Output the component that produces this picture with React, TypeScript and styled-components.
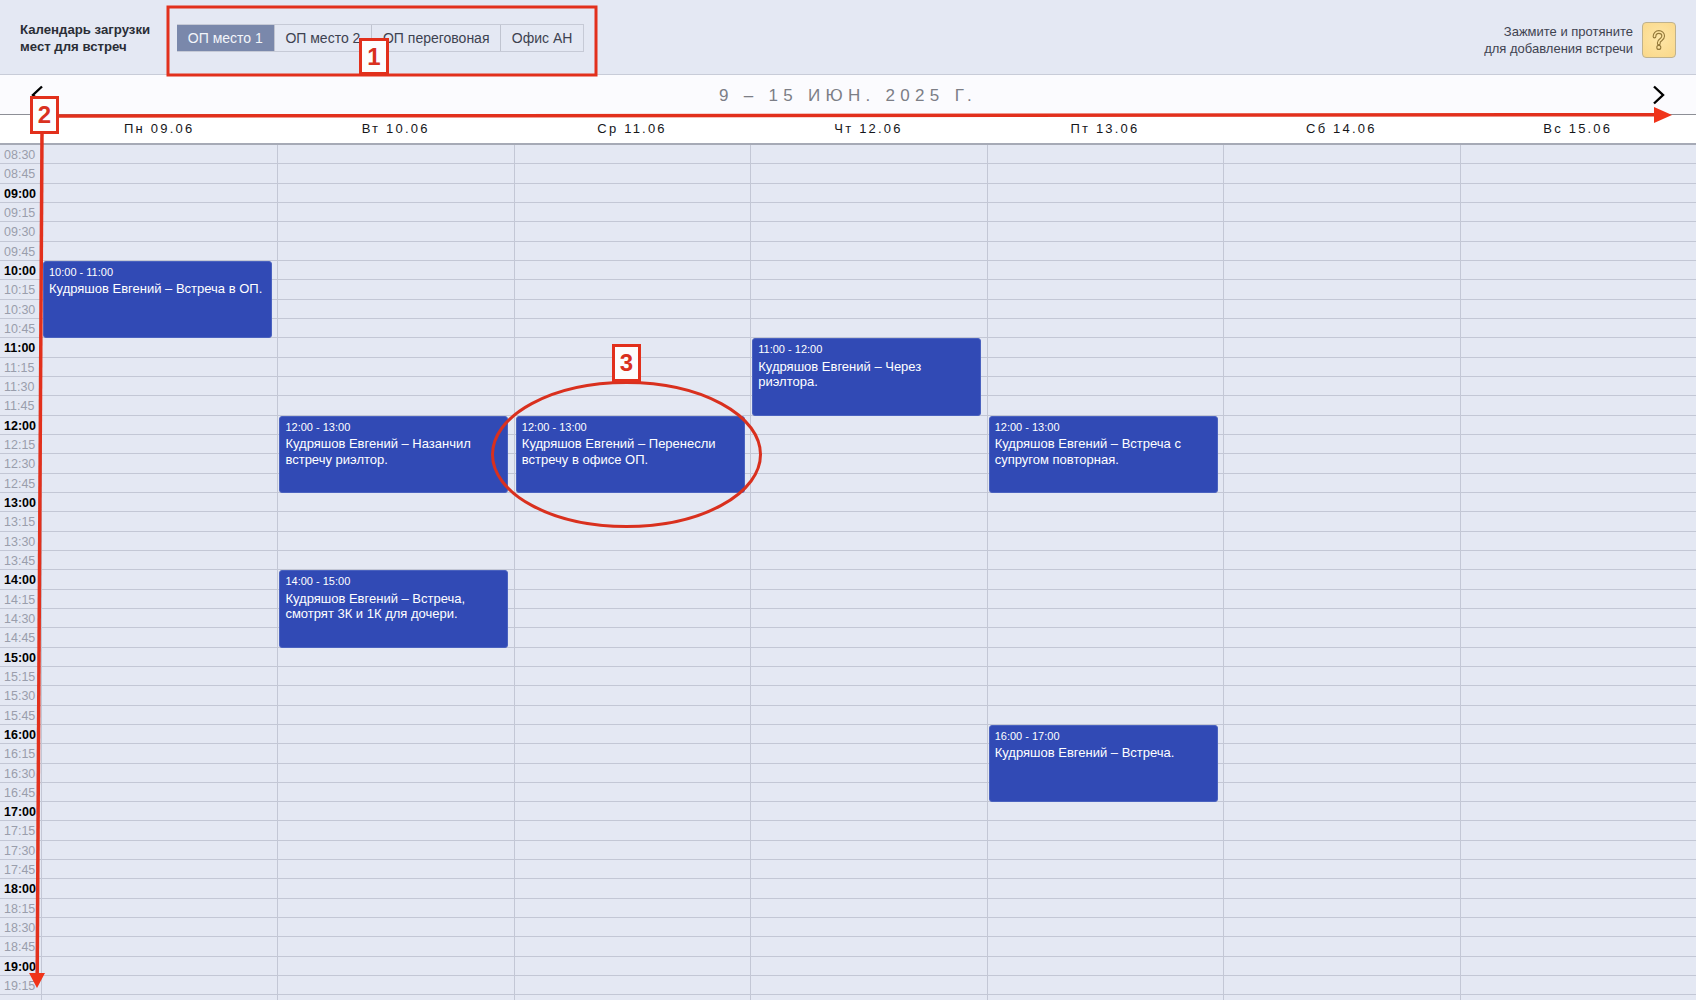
import React from "react";
import styled, { createGlobalStyle } from "styled-components";

const ROW_H = 19.33;
const DAYS = ["Пн 09.06", "Вт 10.06", "Ср 11.06", "Чт 12.06", "Пт 13.06", "Сб 14.06", "Вс 15.06"];
const TABS = ["ОП место 1", "ОП место 2", "ОП переговоная", "Офис АН"];

const slotTimes: string[] = [];
for (let m = 8 * 60 + 30; m <= 19 * 60 + 15; m += 15) {
  slotTimes.push(`${String(Math.floor(m / 60)).padStart(2, "0")}:${String(m % 60).padStart(2, "0")}`);
}
// one empty row cut off by the bottom of the window
slotTimes.push("");

const EVENTS = [
  { day: 0, row: 6, time: "10:00 - 11:00", text: "Кудряшов Евгений – Встреча в ОП." },
  { day: 1, row: 14, time: "12:00 - 13:00", text: "Кудряшов Евгений – Назанчил встречу риэлтор." },
  { day: 1, row: 22, time: "14:00 - 15:00", text: "Кудряшов Евгений – Встреча, смотрят 3К и 1К для дочери." },
  { day: 2, row: 14, time: "12:00 - 13:00", text: "Кудряшов Евгений – Перенесли встречу в офисе ОП." },
  { day: 3, row: 10, time: "11:00 - 12:00", text: "Кудряшов Евгений – Через риэлтора." },
  { day: 4, row: 14, time: "12:00 - 13:00", text: "Кудряшов Евгений – Встреча с супругом повторная." },
  { day: 4, row: 30, time: "16:00 - 17:00", text: "Кудряшов Евгений – Встреча." },
];

const QUESTION = "M4.5 7.5C4.5 4.8 6.4 3 8.8 3s4.4 1.8 4.4 4.1c0 1.9-1.2 2.9-2.4 3.7-1.1.8-2 1.4-2 2.9v.8";

function App() {
  return (
    <Page>
      <GlobalStyle />
      <TopBar>
        <Title>
          Календарь загрузки
          <br />
          мест для встреч
        </Title>
        <Tabs>
          {TABS.map((t, i) => (
            <Tab key={t} $active={i === 0}>
              {t}
            </Tab>
          ))}
        </Tabs>
        <Hint>
          Зажмите и протяните
          <br />
          для добавления встречи
        </Hint>
        <HelpButton>
          <svg width="18" height="22" viewBox="0 0 18 22" fill="none">
            <path d={QUESTION} stroke="#94793a" strokeWidth="3.8" strokeLinecap="round" />
            <path d={QUESTION} stroke="#fde3a0" strokeWidth="1.6" strokeLinecap="round" />
            <circle cx="8.8" cy="18.4" r="2" fill="#fde3a0" stroke="#94793a" strokeWidth="1.1" />
          </svg>
        </HelpButton>
      </TopBar>

      <WeekNav>
        <Chevron width="13" height="20" viewBox="0 0 13 20">
          <path d="M11 1.5L2 10l9 8.5" />
        </Chevron>
        <WeekTitle>9 – 15 ИЮН. 2025 Г.</WeekTitle>
        <Chevron width="13" height="20" viewBox="0 0 13 20">
          <path d="M2 1.5L11 10l-9 8.5" />
        </Chevron>
      </WeekNav>

      <DayHeader>
        <span />
        {DAYS.map((d) => (
          <DayName key={d}>{d}</DayName>
        ))}
      </DayHeader>

      <Grid>
        {slotTimes.map((time, row) => (
          <React.Fragment key={row}>
            <TimeCell $row={row} $hour={time.endsWith(":00")}>
              {time}
            </TimeCell>
            {DAYS.map((d, day) => (
              <Slot key={d} $day={day} $row={row} />
            ))}
          </React.Fragment>
        ))}
        {EVENTS.map((e) => (
          <EventCard key={`${e.day}-${e.row}`} $day={e.day} $row={e.row}>
            <EventTime>{e.time}</EventTime>
            <EventText>{e.text}</EventText>
          </EventCard>
        ))}
      </Grid>

      {/* red callouts drawn on top of the screenshot */}
      <Marks width="1696" height="1000" viewBox="0 0 1696 1000">
        <rect x="168" y="7" width="428" height="68" fill="none" stroke="#e2301c" strokeWidth="3" />
        <path d="M58 116L1658 114.7" stroke="#e2301c" strokeWidth="3.5" />
        <path d="M1654 107l18 8-18 8z" fill="#f0341a" />
        <path d="M42 132L37.2 975" stroke="#e2301c" strokeWidth="3.5" />
        <path d="M29 973h16l-8 15z" fill="#f0341a" />
        <ellipse cx="626.5" cy="454.5" rx="134" ry="72" fill="none" stroke="#d9301e" strokeWidth="3" />
      </Marks>
      <MarkLabel $x={359} $y={38} $w={30} $h={37}>1</MarkLabel>
      <MarkLabel $x={30} $y={96} $w={29} $h={38}>2</MarkLabel>
      <MarkLabel $x={612} $y={344} $w={29} $h={38}>3</MarkLabel>
    </Page>
  );
}

export default App;

const GlobalStyle = createGlobalStyle`
  html, body {
    margin: 0;
    padding: 0;
    background: #e4e8f3;
    font-family: "Liberation Sans", Arial, sans-serif;
  }
`;

const Page = styled.div`
  position: relative;
  width: 1696px;
  height: 1000px;
  overflow: hidden;
  background: #e4e8f3;
`;

const TopBar = styled.div`
  display: flex;
  align-items: flex-start;
  height: 75px;
  padding: 0 20px;
  box-sizing: border-box;
  border-bottom: 1px solid #c8ccd8;
`;

const Title = styled.div`
  width: 157px;
  margin-top: 21px;
  font-size: 13.2px;
  line-height: 17px;
  font-weight: 700;
  color: #2b2e36;
`;

const Tabs = styled.div`
  display: flex;
  height: 28px;
  margin-top: 24px;
  box-sizing: border-box;
  border: 1px solid #c6cad6;
  border-left: none;
`;

const Tab = styled.div<{ $active?: boolean }>`
  display: flex;
  align-items: center;
  padding: 0 10.8px;
  font-size: 14px;
  color: ${(p) => (p.$active ? "#f3f5fa" : "#3d4250")};
  background: ${(p) => (p.$active ? "#7a88ab" : "transparent")};
  border-right: 1px solid #c0c4d0;
  &:last-child {
    padding: 0 10.5px;
    border-right: none;
  }
`;

const Hint = styled.div`
  margin: 23px 9px 0 auto;
  font-size: 13px;
  line-height: 17px;
  text-align: right;
  color: #3f4350;
`;

const HelpButton = styled.div`
  display: flex;
  align-items: center;
  justify-content: center;
  width: 34px;
  height: 36px;
  margin-top: 22px;
  box-sizing: border-box;
  background: radial-gradient(circle at 50% 45%, #fee6a8, #fad888);
  border: 1px solid #bfb28d;
  border-radius: 4px;
`;

const WeekNav = styled.div`
  display: flex;
  align-items: center;
  justify-content: space-between;
  height: 39px;
  padding: 0 31px;
  background: #fbfbfe;
  border-bottom: 1px solid #8d8f96;
`;

const WeekTitle = styled.div`
  margin-top: 2px;
  font-size: 17px;
  letter-spacing: 5.3px;
  color: #7c7e86;
`;

const Chevron = styled.svg`
  fill: none;
  stroke: #000;
  stroke-width: 2.4;
`;

const DayHeader = styled.div`
  display: grid;
  grid-template-columns: 41px repeat(7, 1fr);
  align-items: center;
  height: 28px;
  background: #fff;
  border-bottom: 2px solid #a6aab6;
`;

const DayName = styled.div`
  margin-bottom: 2px;
  text-align: center;
  font-size: 13px;
  letter-spacing: 2.2px;
  color: #15161a;
`;

const Grid = styled.div`
  display: grid;
  grid-template-columns: 41px repeat(7, 1fr);
  grid-auto-rows: ${ROW_H}px;
`;

const TimeCell = styled.div<{ $hour: boolean; $row: number }>`
  grid-column: 1;
  grid-row: ${(p) => p.$row + 1};
  box-sizing: border-box;
  padding-left: 4px;
  font-size: 12.5px;
  line-height: 20.5px;
  white-space: nowrap;
  font-weight: ${(p) => (p.$hour ? 700 : 400)};
  color: ${(p) => (p.$hour ? "#000" : "#9a9eac")};
  border-bottom: 1px solid #c3c7d5;
`;

const Slot = styled.div<{ $day: number; $row: number }>`
  grid-column: ${(p) => p.$day + 2};
  grid-row: ${(p) => p.$row + 1};
  box-sizing: border-box;
  border-left: 1px solid #c3c7d5;
  border-bottom: 1px solid #c3c7d5;
`;

const EventCard = styled.div<{ $day: number; $row: number }>`
  grid-column: ${(p) => p.$day + 2};
  grid-row: ${(p) => p.$row + 1} / span 4;
  margin: 0 5.5px 0 2px;
  padding: 4px 5px;
  box-sizing: border-box;
  background: #314ab5;
  border: 1px solid #4a62bf;
  border-radius: 3px;
  color: #fff;
  overflow: hidden;
`;

const EventTime = styled.div`
  font-size: 11px;
  line-height: 13px;
`;

const EventText = styled.div`
  margin-top: 2.5px;
  font-size: 13px;
  line-height: 15.5px;
`;

const Marks = styled.svg`
  position: absolute;
  top: 0;
  left: 0;
  pointer-events: none;
`;

const MarkLabel = styled.div<{ $x: number; $y: number; $w: number; $h: number }>`
  position: absolute;
  left: ${(p) => p.$x}px;
  top: ${(p) => p.$y}px;
  width: ${(p) => p.$w}px;
  height: ${(p) => p.$h}px;
  box-sizing: border-box;
  display: flex;
  align-items: center;
  justify-content: center;
  background: #fdfdfd;
  border: 3px solid #e2301c;
  font-size: 24px;
  font-weight: 700;
  color: #d9301e;
`;
